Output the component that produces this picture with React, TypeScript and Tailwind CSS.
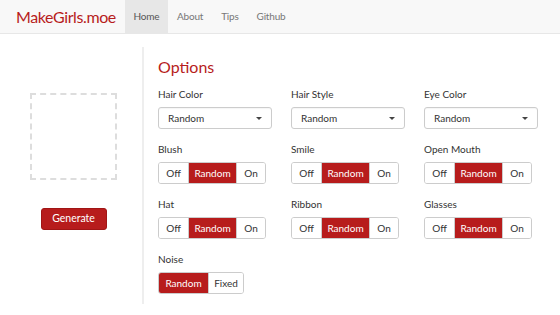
const font = { fontFamily: "Lato, 'Open Sans', sans-serif" };

function Select({ label }: { label: string }) {
  return (
    <div className="flex flex-col">
      <span className="h-[13px] text-[10px] leading-[13px] text-[#333]">{label}</span>
      <div className="mt-[6px] flex h-[22px] w-[114px] items-center justify-between rounded-[3px] border border-[#ccc] bg-white pl-[9px] pr-[9px] text-[10px] text-[#333] shadow-[inset_0_1px_1px_rgba(0,0,0,0.04)]">
        <span>Random</span>
        <span className="h-0 w-0 border-x-[3px] border-t-[3px] border-x-transparent border-t-[#444]" />
      </div>
    </div>
  );
}

function Toggle({ label, options }: { label: string; options: { text: string; w: string; active?: boolean }[] }) {
  return (
    <div className="flex flex-col">
      <span className="h-[13px] text-[10px] leading-[13px] text-[#333]">{label}</span>
      <div className="mt-[6px] flex h-[22px] w-fit overflow-hidden rounded-[3px] border border-[#ccc] text-[10px]">
        {options.map((o, i) => (
          <div
            key={i}
            className={`flex items-center justify-center ${o.w} ${
              o.active ? "bg-[#b71c1c] text-white" : "bg-white text-[#333]"
            } ${i > 0 ? "border-l border-[#ccc]" : ""}`}
          >
            {o.text}
          </div>
        ))}
      </div>
    </div>
  );
}

const triple = [
  { text: "Off", w: "w-[29px]" },
  { text: "Random", w: "w-[48px]", active: true },
  { text: "On", w: "w-[29px]" },
];

export default function App() {
  return (
    <div className="h-[315px] w-[560px] overflow-hidden bg-white" style={font}>
      <nav className="flex h-[34px] items-stretch border-b border-[#e7e7e7] bg-[#f8f8f8]">
        <div className="flex w-[125px] items-center pl-[16px] text-[16px] tracking-[-0.4px] text-[#b71c1c]">MakeGirls.moe</div>
        <div className="flex text-[10px] tracking-[-0.2px] text-[#777]">
          <div className="flex w-[43px] items-center justify-center bg-[#e7e7e7] text-[#555]">Home</div>
          <div className="flex items-center px-[9px]">About</div>
          <div className="flex items-center px-[9px]">Tips</div>
          <div className="flex items-center px-[9px]">Github</div>
        </div>
      </nav>

      <div className="mt-[13px] flex">
        <div className="flex w-[142px] flex-col items-center pl-[5px]">
          <div className="mt-[46px] h-[87px] w-[87px] border-2 border-dashed border-[#ddd]" />
          <button className="mt-[28px] h-[22px] w-[66px] rounded-[3px] border border-[#a01515] bg-[#b71c1c] text-[10.5px] text-white">
            Generate
          </button>
        </div>

        <div className="h-[257px] border-l-2 border-[#eee] pl-[14px]">
          <h1 className="mt-[10px] mb-[11px] h-[20px] text-[16px] leading-[20px] text-[#b71c1c]">Options</h1>
          <div className="grid w-[380px] grid-cols-3 gap-x-[19px] gap-y-[14px]">
            <Select label="Hair Color" />
            <Select label="Hair Style" />
            <Select label="Eye Color" />
            <Toggle label="Blush" options={triple} />
            <Toggle label="Smile" options={triple} />
            <Toggle label="Open Mouth" options={triple} />
            <Toggle label="Hat" options={triple} />
            <Toggle label="Ribbon" options={triple} />
            <Toggle label="Glasses" options={triple} />
            <Toggle
              label="Noise"
              options={[
                { text: "Random", w: "w-[49px]", active: true },
                { text: "Fixed", w: "w-[35px]" },
              ]}
            />
          </div>
        </div>
      </div>
    </div>
  );
}
